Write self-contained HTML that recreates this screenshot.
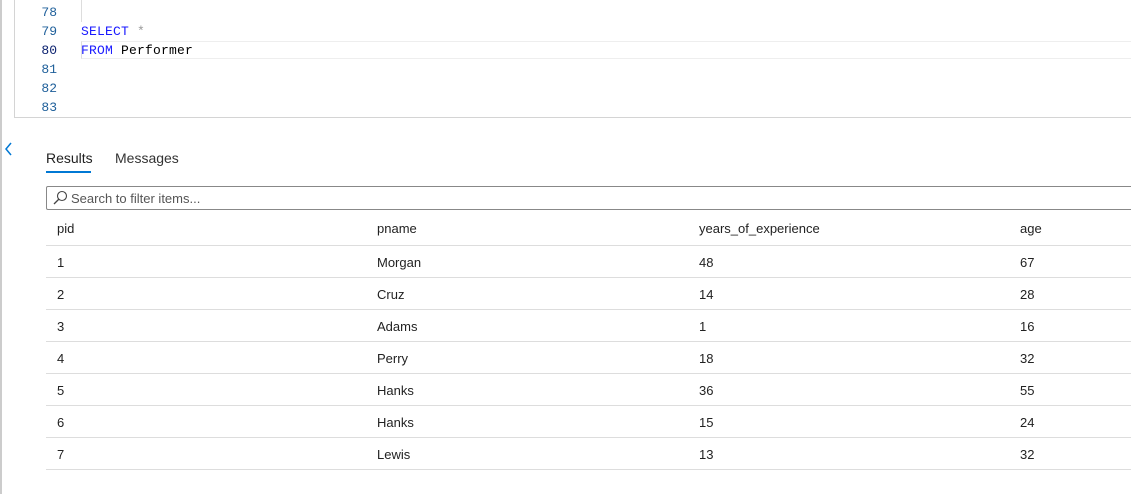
<!DOCTYPE html>
<html><head><style>
body{margin:0;width:1131px;height:494px;background:#fff;position:relative;overflow:hidden;font-family:"Segoe UI","Liberation Sans",sans-serif;}
.abs{position:absolute}
.ln{position:absolute;left:37px;font:13px "Liberation Mono",monospace;color:#1e5f9a;width:20px;text-align:right}
.code{position:absolute;left:81px;font:13px "Liberation Mono",monospace;color:#000;letter-spacing:0.2px}
.kw{color:#1a1aff}
.cell{position:absolute;font-size:13px;color:#222}
.hl{position:absolute;left:46px;right:0;height:1px;background:#ddd}
</style></head><body>
<div class="abs" style="left:0;top:0;width:2px;height:494px;background:#ccc"></div>
<div class="abs" style="left:14px;top:-1px;width:1120px;height:118px;border-left:1px solid #d4d4d4;border-bottom:1px solid #d4d4d4"></div>
<div class="abs" style="left:81px;top:0;width:1px;height:22px;background:#ddd"></div>
<div class="abs" style="left:81px;top:41px;width:1060px;height:16px;border:1px solid #eee;border-left:1px solid #ddd"></div>
<div class="ln" style="top:5px">78</div>
<div class="ln" style="top:24px">79</div>
<div class="ln" style="top:43px;color:#0b216f">80</div>
<div class="ln" style="top:62px">81</div>
<div class="ln" style="top:81px">82</div>
<div class="ln" style="top:100px">83</div>
<div class="code" style="top:24px"><span class="kw">SELECT</span> <span style="color:#999">*</span></div>
<div class="code" style="top:43px"><span class="kw">FROM</span> Performer</div>
<svg class="abs" style="left:3px;top:141px" width="10" height="16"><path d="M8 2 L3 8 L8 14" stroke="#0078d4" stroke-width="1.5" fill="none"/></svg>
<div class="abs" style="left:46px;top:150px;font-size:14px;color:#222">Results</div>
<div class="abs" style="left:46px;top:171px;width:45px;height:2px;background:#0078d4"></div>
<div class="abs" style="left:115px;top:150px;font-size:14px;color:#333">Messages</div>
<div class="abs" style="left:46px;top:186px;width:1090px;height:22px;border:1px solid #888;border-radius:2px"></div>
<svg class="abs" style="left:52px;top:190px" width="16" height="16"><circle cx="10" cy="6" r="4.5" stroke="#444" fill="none" stroke-width="1.1"/><path d="M7 9 L2 14" stroke="#444" stroke-width="1.3"/></svg>
<div class="abs" style="left:71px;top:191px;font-size:13px;color:#555">Search to filter items...</div>
<div class="cell" style="left:57px;top:221px">pid</div>
<div class="cell" style="left:377px;top:221px">pname</div>
<div class="cell" style="left:699px;top:221px">years_of_experience</div>
<div class="cell" style="left:1020px;top:221px">age</div>
<div class="hl" style="top:245px"></div>
<div class="hl" style="top:277px"></div><div class="hl" style="top:309px"></div><div class="hl" style="top:341px"></div><div class="hl" style="top:373px"></div><div class="hl" style="top:405px"></div><div class="hl" style="top:437px"></div><div class="hl" style="top:469px"></div>
<div class="cell" style="left:57px;top:255px">1</div><div class="cell" style="left:377px;top:255px">Morgan</div><div class="cell" style="left:699px;top:255px">48</div><div class="cell" style="left:1020px;top:255px">67</div>
<div class="cell" style="left:57px;top:287px">2</div><div class="cell" style="left:377px;top:287px">Cruz</div><div class="cell" style="left:699px;top:287px">14</div><div class="cell" style="left:1020px;top:287px">28</div>
<div class="cell" style="left:57px;top:319px">3</div><div class="cell" style="left:377px;top:319px">Adams</div><div class="cell" style="left:699px;top:319px">1</div><div class="cell" style="left:1020px;top:319px">16</div>
<div class="cell" style="left:57px;top:351px">4</div><div class="cell" style="left:377px;top:351px">Perry</div><div class="cell" style="left:699px;top:351px">18</div><div class="cell" style="left:1020px;top:351px">32</div>
<div class="cell" style="left:57px;top:383px">5</div><div class="cell" style="left:377px;top:383px">Hanks</div><div class="cell" style="left:699px;top:383px">36</div><div class="cell" style="left:1020px;top:383px">55</div>
<div class="cell" style="left:57px;top:415px">6</div><div class="cell" style="left:377px;top:415px">Hanks</div><div class="cell" style="left:699px;top:415px">15</div><div class="cell" style="left:1020px;top:415px">24</div>
<div class="cell" style="left:57px;top:447px">7</div><div class="cell" style="left:377px;top:447px">Lewis</div><div class="cell" style="left:699px;top:447px">13</div><div class="cell" style="left:1020px;top:447px">32</div>
</body></html>
